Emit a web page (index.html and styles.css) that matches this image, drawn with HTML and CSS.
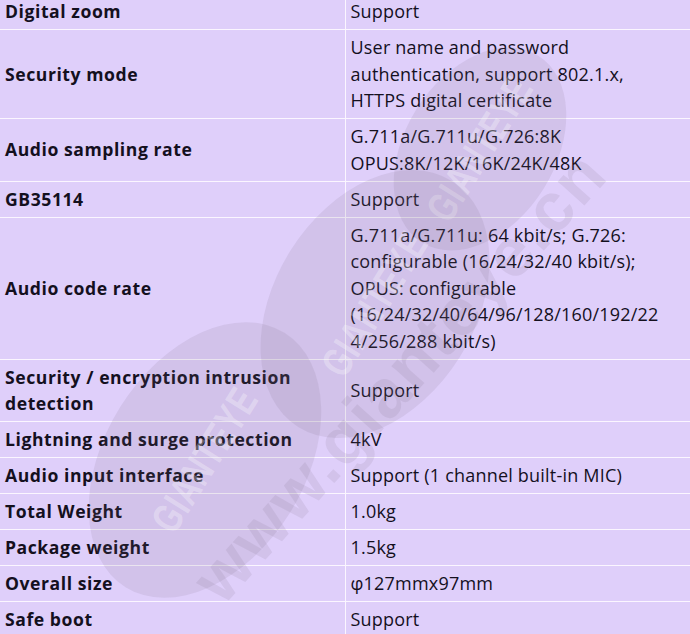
FILE: index.html
```html
<!DOCTYPE html>
<html>
<head>
<meta charset="utf-8">
<link rel="stylesheet" href="styles.css">
</head>
<body>
<div class="page">
  <table class="spec">
    <colgroup><col class="c1"><col class="c2"></colgroup>
    <tr><th>Digital zoom</th><td>Support</td></tr>
    <tr><th>Security mode</th><td>User name and password<br>authentication, support 802.1.x,<br>HTTPS digital certificate</td></tr>
    <tr><th>Audio sampling rate</th><td>G.711a/G.711u/G.726:8K<br>OPUS:8K/12K/16K/24K/48K</td></tr>
    <tr><th>GB35114</th><td>Support</td></tr>
    <tr><th>Audio code rate</th><td>G.711a/G.711u: 64 kbit/s; G.726:<br>configurable (16/24/32/40 kbit/s);<br>OPUS: configurable<br>(16/24/32/40/64/96/128/160/192/22<br>4/256/288 kbit/s)</td></tr>
    <tr><th>Security / encryption intrusion<br>detection</th><td>Support</td></tr>
    <tr><th>Lightning and surge protection</th><td>4kV</td></tr>
    <tr><th>Audio input interface</th><td>Support (1 channel built-in MIC)</td></tr>
    <tr><th>Total Weight</th><td>1.0kg</td></tr>
    <tr><th>Package weight</th><td>1.5kg</td></tr>
    <tr><th>Overall size</th><td>φ127mmx97mm</td></tr>
    <tr><th>Safe boot</th><td>Support</td></tr>
  </table>
  <div class="wm" aria-hidden="true">
    <div class="blob b1"><span>GIANTEYE</span></div>
    <div class="blob b2"><span>GIANTEYE</span></div>
    <div class="blob b3"><span>GIANTEYE</span></div>
    <div class="url">www.gianteye.cn</div>
  </div>
</div>
</body>
</html>
```
FILE: styles.css
```css
html, body {
  margin: 0;
  padding: 0;
  background: #dfcffa;
}
body {
  width: 690px;
  height: 634px;
  overflow: hidden;
  font-family: "Open Sans", "Noto Sans", sans-serif;
  color: #14101e;
}
.page {
  position: relative;
  margin-top: -6px;
}
.spec {
  width: 690px;
  border-collapse: collapse;
  table-layout: fixed;
  font-size: 18px;
  line-height: 26.5px;
}
.c1 { width: 345px; }
.c2 { width: 345px; }
.spec th,
.spec td {
  text-align: left;
  vertical-align: middle;
  padding: 4px 5px 4.5px 5px;
  border-bottom: 1px solid #fbf6ff;
  white-space: nowrap;
}
.spec th {
  font-weight: 700;
  font-size: 17.6px;
  letter-spacing: 0.55px;
  border-right: 1px solid #fbf6ff;
}
.spec td {
  font-weight: 400;
  letter-spacing: 0.2px;
}
.wm {
  position: absolute;
  inset: 0;
  pointer-events: none;
}
.blob {
  position: absolute;
  border-radius: 50%;
  background: rgba(120, 110, 130, 0.13);
  display: flex;
  align-items: center;
  justify-content: center;
  transform: rotate(-58deg);
}
.blob span {
  font-family: "Liberation Sans", sans-serif;
  font-weight: 700;
  font-size: 30px;
  letter-spacing: 1px;
  color: rgba(255, 255, 255, 0.3);
  transform: scaleY(1.4);
}
.b1 { left: 370px; top: 80px; width: 220px; height: 150px; }
.b2 { left: 230px; top: 210px; width: 290px; height: 200px; }
.b3 { left: 55px; top: 366px; width: 300px; height: 200px; }
.url {
  position: absolute;
  left: 205px;
  top: 562px;
  font-family: "Liberation Sans", sans-serif;
  font-weight: 700;
  font-size: 68px;
  line-height: 70px;
  letter-spacing: 2px;
  color: rgba(120, 110, 130, 0.13);
  transform: rotate(-48deg);
  transform-origin: 0 50%;
  white-space: nowrap;
}
```
